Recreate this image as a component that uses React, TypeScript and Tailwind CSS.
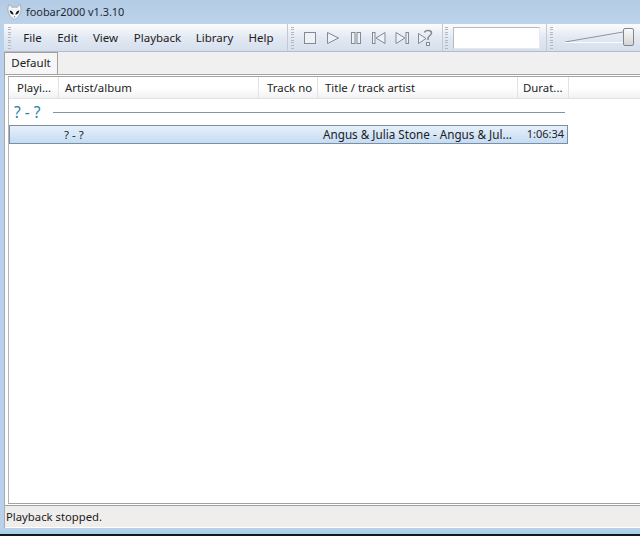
const menus = [
  { label: 'File', cls: 'w-[35px]' },
  { label: 'Edit', cls: 'w-[35px]' },
  { label: 'View', cls: 'w-[41px]' },
  { label: 'Playback', cls: 'w-[63px]' },
  { label: 'Library', cls: 'w-[51px]' },
  { label: 'Help', cls: 'w-[42px]' },
];

function Gripper() {
  return (
    <div className="flex h-[26px] w-[3px] shrink-0 flex-col justify-between py-[2px]">
      {Array.from({ length: 9 }).map((_, i) => (
        <div key={i} className="h-[1px] w-[3px] bg-[#b4b9c1]" />
      ))}
    </div>
  );
}

function Transport() {
  const s = '#858a92';
  return (
    <div className="flex items-center gap-[7px] text-[0px]">
      <svg width="16" height="16" viewBox="0 0 16 16" fill="none" stroke={s}>
        <rect x="2.5" y="2.5" width="11" height="11" fill="#eef1f5" />
      </svg>
      <svg width="16" height="16" viewBox="0 0 16 16" fill="none" stroke={s}>
        <path d="M2.5 2.5 L13.5 8 L2.5 13.5 Z" fill="#eef1f5" />
      </svg>
      <svg width="16" height="16" viewBox="0 0 16 16" fill="none" stroke={s}>
        <rect x="3.5" y="2.5" width="3.5" height="11" fill="#eef1f5" />
        <rect x="9" y="2.5" width="3.5" height="11" fill="#eef1f5" />
      </svg>
      <svg width="16" height="16" viewBox="0 0 16 16" fill="none" stroke={s}>
        <rect x="1.5" y="2.5" width="2.5" height="11" fill="#eef1f5" />
        <path d="M14 2.5 L5 8 L14 13.5 Z" fill="#eef1f5" />
      </svg>
      <svg width="16" height="16" viewBox="0 0 16 16" fill="none" stroke={s}>
        <path d="M2 2.5 L11 8 L2 13.5 Z" fill="#eef1f5" />
        <rect x="12" y="2.5" width="2.5" height="11" fill="#eef1f5" />
      </svg>
      <svg width="17" height="18" viewBox="0 0 17 18" fill="none" stroke={s}>
        <path d="M1.5 4.5 L9 9.5 L1.5 14.5 Z" fill="#eef1f5" />
        <path d="M7.5 3.5 C8 1 14.5 0.5 14.5 4 C14.5 6.5 11 6.5 11 9.5 L11 11" strokeWidth="1.5" />
        <rect x="9.5" y="13.5" width="3" height="3" fill="#eef1f5" />
      </svg>
    </div>
  );
}

export default function App() {
  return (
    <div className="flex h-[537px] w-[640px] flex-col overflow-hidden bg-[#b9d1ea] font-['Noto_Sans',sans-serif] text-[11.5px] text-[#222222]">
      {/* title bar */}
      <div className="flex h-[24px] shrink-0 items-center bg-gradient-to-b from-[#b3cbe4] to-[#bcd3eb] pl-[7px]">
        <svg width="15" height="16" viewBox="0 0 15 16" className="shrink-0">
          <path d="M2 0.5 L5 3.5 C6.3 3 8.7 3 10 3.5 L13 0.5 C14 3 14.4 6 13.6 8 C12.8 11 10 14.5 7.5 15.5 C5 14.5 2.2 11 1.4 8 C0.6 6 1 3 2 0.5 Z" fill="#f5f6f8" stroke="#8d939b" strokeWidth="0.6" />
          <path d="M2.6 6.5 C4.8 6.6 6.3 8.3 6.6 10.8 C4.4 10.6 3 8.8 2.6 6.5 Z M12.4 6.5 C10.2 6.6 8.7 8.3 8.4 10.8 C10.6 10.6 12 8.8 12.4 6.5 Z" fill="#0f1216" />
          <path d="M6.7 12.6 L8.3 12.6 L7.5 13.8 Z" fill="#3a3d42" />
        </svg>
        <span className="ml-[4px] text-[10.9px] text-[#1f2a36]">foobar2000 v1.3.10</span>
      </div>

      {/* window body */}
      <div className="ml-[4px] flex min-h-0 flex-1 flex-col border-l border-[#a7adb5]">
        {/* toolbar */}
        <div className="-ml-[1px] flex h-[28px] shrink-0 items-center border-b border-[#b7bcc4] bg-gradient-to-b from-[#fbfcfd] via-[#e3e9f3] to-[#d5dfee] pl-[4px]">
          <Gripper />
          <div className="ml-[4px] flex h-full items-center">
            {menus.map((m) => (
              <div key={m.label} className={`${m.cls} text-center`}>{m.label}</div>
            ))}
          </div>
          <div className="ml-[5px] h-full w-[1px] bg-[#c3c9d3]" />
          <div className="ml-[3px]"><Gripper /></div>
          <div className="ml-[8px]"><Transport /></div>
          <div className="ml-[8px] h-full w-[1px] bg-[#c3c9d3]" />
          <div className="ml-[2px]"><Gripper /></div>
          <div className="ml-[5px] h-[22px] w-[87px] border border-[#b5b9c0] border-b-[#e5e9f0] border-r-[#e5e9f0] bg-white" />
          <div className="ml-[6px] h-full w-[1px] bg-[#c3c9d3]" />
          <div className="ml-[3px]"><Gripper /></div>
          <div className="relative ml-[12px] h-[20px] w-[70px]">
            <svg width="64" height="12" viewBox="0 0 64 12" className="absolute left-0 top-[3px]">
              <path d="M0 11 L58 1" stroke="#8f949b" fill="none" />
              <path d="M0 11.5 L58 11.5" stroke="#fbfcfd" fill="none" />
            </svg>
            <div className="absolute left-[58px] top-0 h-[18px] w-[11px] rounded-[2px] border border-[#7f858d] bg-gradient-to-b from-[#fafafa] to-[#d5d5d5]" />
          </div>
        </div>

        {/* tab strip */}
        <div className="-ml-[1px] flex h-[22px] shrink-0 bg-[#f0f0f0]">
          <div className="flex h-[22px] w-[54px] items-center justify-center border-l border-r border-t border-[#a0a0a0] bg-[#f6f6f6] pb-[1px]">
            Default
          </div>
        </div>

        {/* playlist */}
        <div className="flex min-h-0 flex-1 flex-col border-y border-y-[#a3a3a3] bg-white py-[1px] pl-[3px]">
          <div className="min-h-0 flex-1 border-y border-l border-y-[#a3a3a3] border-l-[#b5b5b5]">
            {/* header */}
            <div className="flex h-[22px] items-center border-b border-[#e2e3e5] bg-gradient-to-b from-white via-white to-[#f1f2f4] text-[11.4px]">
              <div className="w-[50px] border-r border-[#e2e3e5] pl-[8px] leading-[21px]">Playi...</div>
              <div className="w-[200px] border-r border-[#e2e3e5] pl-[6px] leading-[21px]">Artist/album</div>
              <div className="w-[59px] border-r border-[#e2e3e5] pl-[8px] leading-[21px]">Track no</div>
              <div className="w-[200px] border-r border-[#e2e3e5] pl-[7px] leading-[21px]">Title / track artist</div>
              <div className="w-[51px] border-r border-[#e2e3e5] pl-[5px] leading-[21px]">Durat...</div>
            </div>
            {/* group */}
            <div className="flex h-[26px] w-[556px] items-center pl-[5px]">
              <span className="pt-[2px] text-[15.5px] text-[#2f7fa6]">? - ?</span>
              <div className="ml-[12px] h-[1px] flex-1 bg-[#7f98a8]" />
            </div>
            {/* row */}
            <div className="flex h-[19px] w-[559px] items-center border border-[#7d8ea3] bg-gradient-to-b from-[#e6f0fa] to-[#c4dcf3]">
              <div className="w-[49px]" />
              <div className="w-[262px] pl-[5px]">? - ?</div>
              <div className="w-[195px] truncate pl-[2px] text-[11.7px]">Angus &amp; Julia Stone - Angus &amp; Jul...</div>
              <div className="flex-1 pr-[3px] text-right text-[11px]">1:06:34</div>
            </div>
          </div>
        </div>

        {/* status bar */}
        <div className="flex h-[22px] shrink-0 items-center border-b border-white bg-[#f0eeec] pl-[1px] pt-[2px] text-[11.3px]">
          Playback stopped.
        </div>
      </div>
      <div className="h-[6px] shrink-0 bg-gradient-to-b from-[#b9d1ea] to-[#a3d0e6]" />
      <div className="h-[2px] shrink-0 bg-[#14181c]" />
      <div className="h-[1px] shrink-0 bg-white" />
    </div>
  );
}
